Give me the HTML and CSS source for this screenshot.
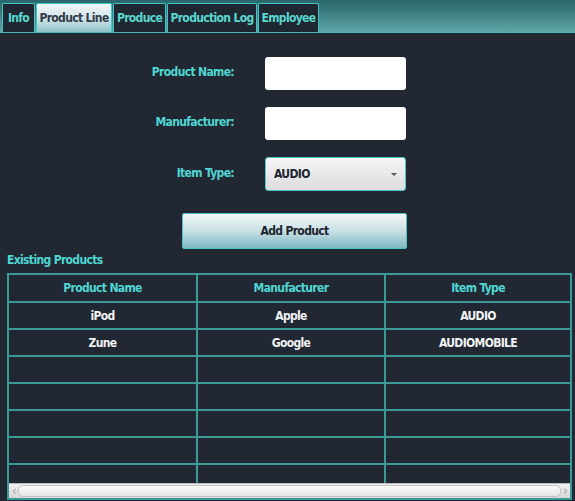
FILE: index.html
```html
<!DOCTYPE html>
<html>
<head>
<meta charset="utf-8">
<link rel="stylesheet" href="styles.css">
</head>
<body>
<div class="app">
  <div class="tabbar">
    <div class="tab t-info">Info</div>
    <div class="tab t-line active">Product Line</div>
    <div class="tab t-prod">Produce</div>
    <div class="tab t-log">Production Log</div>
    <div class="tab t-emp">Employee</div>
  </div>
  <div class="content">
    <div class="form">
      <div class="label l1">Product Name:</div>
      <div class="field"></div>
      <div class="label l2">Manufacturer:</div>
      <div class="field"></div>
      <div class="label l3">Item Type:</div>
      <div class="combo"><span>AUDIO</span><span class="arrow"></span></div>
    </div>
    <div class="btnrow"><div class="button">Add Product</div></div>
    <div class="section">Existing Products</div>
    <div class="tablebox">
      <div class="tablearea">
        <table class="grid">
          <thead>
            <tr><th>Product Name</th><th>Manufacturer</th><th>Item Type</th></tr>
          </thead>
          <tbody>
            <tr><td>iPod</td><td>Apple</td><td>AUDIO</td></tr>
            <tr><td>Zune</td><td>Google</td><td>AUDIOMOBILE</td></tr>
            <tr><td></td><td></td><td></td></tr>
            <tr><td></td><td></td><td></td></tr>
            <tr><td></td><td></td><td></td></tr>
            <tr><td></td><td></td><td></td></tr>
            <tr><td></td><td></td><td></td></tr>
          </tbody>
        </table>
      </div>
      <div class="hscroll">
        <span class="sarrow">&#8249;</span>
        <div class="thumb"></div>
        <span class="sarrow">&#8250;</span>
      </div>
    </div>
  </div>
</div>
</body>
</html>
```
FILE: styles.css
```css
html, body {
  margin: 0;
  padding: 0;
  background: #212834;
}
body {
  font-family: "DejaVu Sans Condensed", "DejaVu Sans", sans-serif;
  font-stretch: condensed;
  font-weight: bold;
  font-size: 12px;
  letter-spacing: -0.65px;
}
.app {
  width: 575px;
  height: 501px;
  overflow: hidden;
  background: #212834;
}
.tabbar {
  height: 29px;
  padding: 3px 0 0 2px;
  display: flex;
  gap: 1px;
  background: linear-gradient(#28666b, #5ea5a8);
  border-bottom: 1px solid #47b9b9;
}
.tab {
  box-sizing: border-box;
  height: 29px;
  border: 1px solid #3fc3c3;
  border-bottom: none;
  background: #1f2733;
  color: #5ad8d0;
  display: flex;
  align-items: center;
  justify-content: center;
  border-radius: 2px 2px 0 0;
}
.tab.active {
  background: linear-gradient(#f2f6f7, #cfe3e6 55%, #8ec3c8);
  color: #2f3b4a;
}
.t-info { width: 33px; }
.t-line { width: 76px; }
.t-prod { width: 53px; }
.t-log { width: 90px; }
.t-emp { width: 61px; }

.content {
  padding-top: 24px;
}
.form {
  display: grid;
  grid-template-columns: 234px 141px;
  column-gap: 31px;
  row-gap: 17px;
  align-items: center;
}
.label {
  color: #4fd6d2;
  text-align: right;
  margin-top: -3px;
}
.field {
  height: 33px;
  background: #ffffff;
  border-radius: 3px;
}
.combo {
  box-sizing: border-box;
  height: 34px;
  border: 1px solid #4fc8c8;
  border-radius: 3px;
  background: linear-gradient(#f6f6f6, #dcdcdc);
  color: #1e2530;
  display: flex;
  align-items: center;
  justify-content: space-between;
  padding: 0 8px 0 8px;
}
.arrow {
  width: 0;
  height: 0;
  border-left: 3px solid transparent;
  border-right: 3px solid transparent;
  border-top: 3px solid #555;
}
.btnrow {
  padding: 22px 0 0 182px;
}
.button {
  box-sizing: border-box;
  width: 225px;
  height: 36px;
  border: 1px solid #4cc4c4;
  border-radius: 2px;
  background: linear-gradient(#f4f7f8, #c8e0e4 50%, #7db8c3);
  color: #1e2530;
  display: flex;
  align-items: center;
  justify-content: center;
}
.section {
  color: #4fd6d2;
  padding: 4px 0 0 7px;
  height: 24px;
  line-height: 14px;
  box-sizing: border-box;
}
.tablebox {
  box-sizing: border-box;
  margin-left: 7px;
  width: 565px;
  height: 227px;
  border: 2px solid #3b9a95;
  display: flex;
  flex-direction: column;
  overflow: hidden;
}
.tablearea {
  flex: 1;
  overflow: hidden;
}
.grid {
  width: 100%;
  border-collapse: collapse;
  table-layout: fixed;
}
.grid th, .grid td {
  border: 2px solid #3b9a95;
  text-align: center;
  padding: 0;
}
.grid tr > :first-child { border-left: none; }
.grid tr > :last-child { border-right: none; }
.grid thead th { border-top: none; }
.grid th {
  height: 26px;
  color: #4fd6d2;
  font-weight: bold;
}
.grid td {
  height: 25px;
  color: #f2f2f2;
}
.grid th:nth-child(1) { width: 187px; }
.grid th:nth-child(2) { width: 186px; }
.hscroll {
  height: 14px;
  background: linear-gradient(#f0f0f0, #d8d8d8);
  display: flex;
  align-items: center;
  gap: 2px;
  padding: 0 3px;
  border-top: 1px solid #bbb;
}
.sarrow {
  color: #999;
  font-weight: normal;
  font-size: 13px;
  line-height: 12px;
}
.thumb {
  flex: 1;
  height: 10px;
  border: 1px solid #c4c4c4;
  border-radius: 5px;
  background: linear-gradient(#fafafa, #e6e6e6);
}
```
